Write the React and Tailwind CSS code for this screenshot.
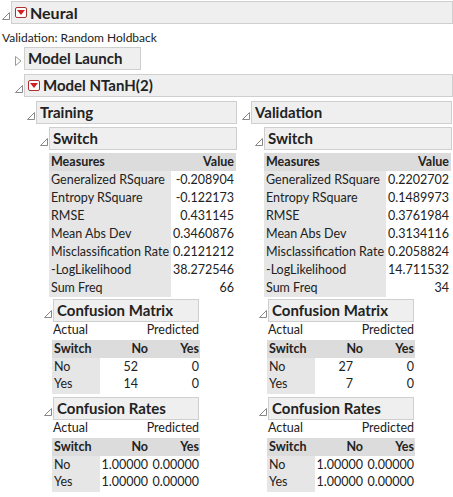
const F = { fontFamily: "Lato, 'Open Sans', sans-serif" };

function Tri({ open = true }) {
  return open ? (
    <svg width="8" height="8" viewBox="0 0 8 8" className="shrink-0 mr-[1px] mb-[4px]"><path d="M7.5 0.5 L7.5 7.5 L0.5 7.5 Z" fill="none" stroke="#888" strokeWidth="1" /></svg>
  ) : (
    <svg width="7" height="10" viewBox="0 0 7 10" className="shrink-0 mr-[2px] mb-[4px]"><path d="M0.5 0.5 L6 5 L0.5 9.5 Z" fill="none" stroke="#999" strokeWidth="1" /></svg>
  );
}
function Red() {
  return (
    <span className="inline-flex items-center justify-center w-[12px] h-[11px] border border-[#b03030] bg-white rounded-[2px] mr-[3px]">
      <svg width="8" height="5" viewBox="0 0 8 5"><path d="M0 0 L8 0 L4 5 Z" fill="#d21f1f" /></svg>
    </span>
  );
}
function Head({ children, w, open = true, red = false, size = "text-[15px]" }) {
  return (
    <div className="flex items-end">
      <Tri open={open} />
      <div className={`flex items-center h-[23px] bg-[#efefef] border border-[#cfcfcf] px-[3px] font-bold text-[#222] ${size} ${w}`}>
        {red && <Red />}{children}
      </div>
    </div>
  );
}

function Measures({ rows }) {
  return (
    <table className="text-[12.5px] text-[#222] border-collapse w-[180px] leading-[16px]">
      <thead>
        <tr className="bg-[#dcdcdc]"><th className="text-left font-bold px-[2px] h-[18px]">Measures</th><th className="text-right font-bold px-[2px]">Value</th></tr>
      </thead>
      <tbody>
        {rows.map(([a, b]) => (
          <tr key={a}><td className="bg-[#e6e6e6] px-[2px] h-[18px] whitespace-nowrap">{a}</td><td className="text-right px-[2px] whitespace-nowrap">{b}</td></tr>
        ))}
      </tbody>
    </table>
  );
}

function Conf({ rows, wide }) {
  return (
    <div className="text-[12.5px] text-[#222] w-[148px]">
      <div className="flex justify-between h-[18px] items-end px-[1px]"><span>Actual</span><span>Predicted</span></div>
      <div className="grid grid-cols-[48px_1fr_1fr] bg-[#dcdcdc] font-bold h-[18px] items-center">
        <span className="px-[2px]">Switch</span><span className="text-right pr-[2px]">No</span><span className="text-right pr-[1px]">Yes</span>
      </div>
      {rows.map(([a, b, c]) => (
        <div key={a} className="grid grid-cols-[48px_1fr_1fr] h-[17px] items-center">
          <span className="bg-[#e6e6e6] h-full px-[2px] flex items-center">{a}</span>
          <span className={`text-right ${wide ? "pr-[2px]" : "pr-[12px]"}`}>{b}</span><span className="text-right pr-[1px]">{c}</span>
        </div>
      ))}
    </div>
  );
}

function Panel({ title, m, cm, cr }) {
  return (
    <div className="flex flex-col">
      <Head w="w-[201px]">{title}</Head>
      <div className="pl-[13px] mt-[3px] flex flex-col">
        <Head w="w-[188px]">Switch</Head>
        <div className="pl-[9px] mt-[3px]"><Measures rows={m} /></div>
        <div className="pl-[4px] mt-[2px]">
          <Head w="w-[146px]">Confusion Matrix</Head>
          <div className="pl-[8px]"><Conf rows={cm} /></div>
          <div className="mt-[5px]"><Head w="w-[146px]">Confusion Rates</Head></div>
          <div className="pl-[8px]"><Conf rows={cr} wide /></div>
        </div>
      </div>
    </div>
  );
}

export default function App() {
  return (
    <div style={F} className="w-[453px] h-[497px] bg-white overflow-hidden pl-[2px] pt-[1px]">
      <Head w="w-[442px]" red size="text-[16px]">Neural</Head>
      <div className="text-[12px] text-[#222] mt-[5px] h-[16px]">Validation: Random Holdback</div>
      <div className="pl-[13px] mt-[2px] flex flex-col gap-[4px]">
        <Head w="w-[117px]" open={false}>Model Launch</Head>
        <Head w="w-[429px]" red>Model NTanH(2)</Head>
        <div className="pl-[12px] flex gap-[5px]">
          <Panel title="Training"
            m={[["Generalized RSquare","-0.208904"],["Entropy RSquare","-0.122173"],["RMSE","0.431145"],["Mean Abs Dev","0.3460876"],["Misclassification Rate","0.2121212"],["-LogLikelihood","38.272546"],["Sum Freq","66"]]}
            cm={[["No","52","0"],["Yes","14","0"]]}
            cr={[["No","1.00000","0.00000"],["Yes","1.00000","0.00000"]]} />
          <Panel title="Validation"
            m={[["Generalized RSquare","0.2202702"],["Entropy RSquare","0.1489973"],["RMSE","0.3761984"],["Mean Abs Dev","0.3134116"],["Misclassification Rate","0.2058824"],["-LogLikelihood","14.711532"],["Sum Freq","34"]]}
            cm={[["No","27","0"],["Yes","7","0"]]}
            cr={[["No","1.00000","0.00000"],["Yes","1.00000","0.00000"]]} />
        </div>
      </div>
    </div>
  );
}
